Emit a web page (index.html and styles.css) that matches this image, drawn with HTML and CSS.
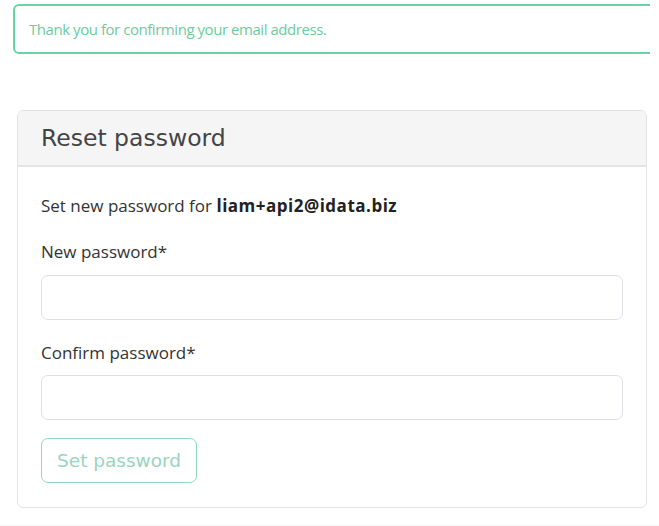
FILE: index.html
```html
<!DOCTYPE html>
<html lang="en">
<head>
<meta charset="utf-8">
<title>Reset password</title>
<link rel="stylesheet" href="styles.css">
</head>
<body>
<div class="page">
  <div class="alert-wrap">
    <div class="alert">Thank you for confirming your email address.</div>
  </div>
  <div class="card">
    <div class="card-header">Reset password</div>
    <div class="card-body">
      <p class="intro">Set new password for <strong>liam+api2@idata.biz</strong></p>
      <div class="field">
        <label class="label" for="np">New password*</label>
        <input class="input" id="np" type="password">
      </div>
      <div class="field">
        <label class="label" for="cp">Confirm password*</label>
        <input class="input" id="cp" type="password">
      </div>
      <button class="btn" type="button" disabled>Set password</button>
    </div>
  </div>
</div>
<div class="footer"></div>
</body>
</html>
```
FILE: styles.css
```css
html, body {
  margin: 0;
  padding: 0;
  background: #fff;
}
body {
  font-family: "Open Sans", "Liberation Sans", sans-serif;
  font-size: 17px;
  color: #333;
  overflow: hidden;
}
.page {
  padding: 4px 12px 0 13px;
}
.alert-wrap {
  width: 637px;
  overflow: hidden;
}
.alert {
  width: 700px;
  box-sizing: border-box;
  height: 50px;
  border: 2px solid #63d6a5;
  border-radius: 6px;
  padding: 0 0 0 14px;
  display: flex;
  align-items: center;
  color: #6ccc9e;
  font-size: 15px;
  letter-spacing: -0.45px;
}
.card {
  margin: 56px 0 0 4px;
  width: 630px;
  box-sizing: border-box;
  border: 1px solid #e3e3e3;
  border-radius: 6px;
  overflow: hidden;
}
.card-header {
  height: 56px;
  box-sizing: border-box;
  background: #f5f5f5;
  border-bottom: 2px solid #e5e5e5;
  padding: 0 23px;
  display: flex;
  align-items: center;
  font-family: "DejaVu Sans", sans-serif;
  font-size: 23.5px;
  color: #444;
}
.card-body {
  padding: 27px 23px 24px 23px;
}
.intro {
  margin: 0;
  line-height: 24px;
}
.intro strong {
  font-weight: 700;
  color: #222;
  letter-spacing: 0.5px;
}
.field {
  display: flex;
  flex-direction: column;
}
.field + .field {
  margin-top: 21px;
}
.intro + .field {
  margin-top: 22px;
}
.label {
  line-height: 24px;
  margin-bottom: 11px;
}
.field + .field .label {
  margin-bottom: 10px;
}
.input {
  height: 45px;
  box-sizing: border-box;
  width: 582px;
  border: 1px solid #dcdfe4;
  border-radius: 7px;
  background: #fff;
  font: inherit;
  margin: 0;
}
.btn {
  margin-top: 18px;
  height: 45px;
  padding: 0 15px;
  background: #fff;
  border: 1.5px solid #91d8bf;
  border-radius: 7px;
  font-family: "DejaVu Sans", sans-serif;
  font-size: 18.5px;
  color: #9ad4c0;
  display: block;
}
.footer {
  margin-top: 17px;
  height: 20px;
  background: #f8f8f8;
}
```
